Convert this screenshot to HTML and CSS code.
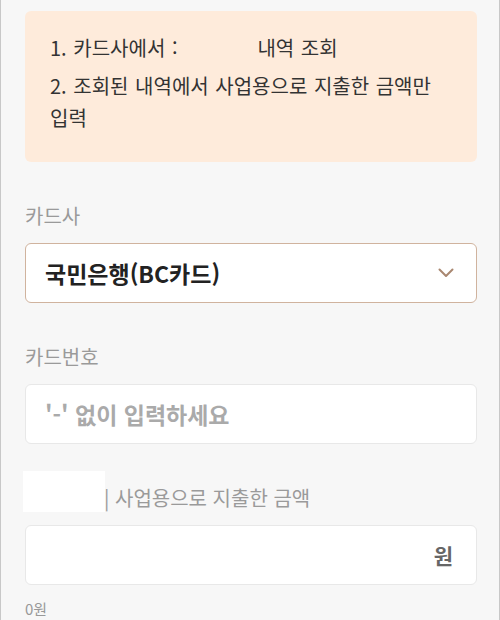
FILE: index.html
```html
<!DOCTYPE html>
<html lang="ko">
<head>
    <meta charset="UTF-8">
    <title>카드 사용내역 입력</title>
    <link rel="stylesheet" href="styles.css">
</head>
<body>

<div id="container">
    <!--안내 박스-->
    <div class="guideBox">
        <p class="guideLine">1. 카드사에서 :<span class="gap"></span>내역 조회</p>
        <p class="guideLine">2. 조회된 내역에서 사업용으로 지출한 금액만 입력</p>
    </div>

    <div class="field firstField">
        <div class="fieldLabel">카드사</div>
        <div class="selectBox">
            <span class="selectText">국민은행(BC카드)</span>
            <svg class="chevron" width="16" height="10" viewBox="0 0 16 10">
                <path d="M1.5 1.5 L8 8 L14.5 1.5" fill="none" stroke="#a98770" stroke-width="2" stroke-linecap="round" stroke-linejoin="round"/>
            </svg>
        </div>
    </div>

    <div class="field">
        <div class="fieldLabel">카드번호</div>
        <div class="inputBox">
            <span class="placeholder">'-' 없이 입력하세요</span>
        </div>
    </div>

    <div class="field">
        <!--가려진 부분은 흰 박스로 덮음-->
        <div class="fieldLabel coveredLabel"><span class="hidden"></span>| 사업용으로 지출한 금액</div>
        <div class="inputBox amountBox">
            <span class="unit">원</span>
        </div>
        <div class="amountHint">0원</div>
    </div>
</div>

</body>
</html>
```

FILE: styles.css
```css
/*CSS for whole page*/
body {
    margin: 0;
    background-color: #f7f7f7;
    font-family: "Noto Sans CJK KR", "Noto Sans", sans-serif;
}

#container {
    box-sizing: border-box;
    width: 500px;
    height: 620px;
    border-left: 1px solid #c8c8c8;
    border-right: 1px solid #c8c8c8;
    padding: 11px 22px 0 24px;
    overflow: hidden;
}

/*CSS for the guide box*/
.guideBox {
    background-color: #feebdb;
    border-radius: 6px;
    padding: 21px 25px 0 25px;
    height: 151px;
    box-sizing: border-box;
}

.guideLine {
    margin: 0 0 6px 0;
    font-size: 20px;
    line-height: 32px;
    word-spacing: 1px;
    color: #333333;
}

.gap {
    display: inline-block;
    width: 80px;
}

/*CSS for each field*/
.field {
    margin-top: 40px;
}

.fieldLabel {
    font-size: 20px;
    line-height: 28px;
    color: #9a9a9a;
    margin-bottom: 13px;
}

.coveredLabel {
    position: relative;
    padding-left: 79px;
}

.hidden {
    position: absolute;
    left: -2px;
    top: -13px;
    width: 82px;
    height: 41px;
    background-color: #ffffff;
}

.selectBox {
    display: flex;
    align-items: center;
    justify-content: space-between;
    height: 60px;
    box-sizing: border-box;
    background-color: #ffffff;
    border: 1px solid #d0b39e;
    border-radius: 6px;
    padding: 0 22px 0 19px;
}

.selectText {
    font-size: 23px;
    font-weight: bold;
    color: #222222;
}

.inputBox {
    display: flex;
    align-items: center;
    height: 60px;
    box-sizing: border-box;
    background-color: #ffffff;
    border: 1px solid #e8e8e8;
    border-radius: 6px;
    padding: 0 23px 0 19px;
}

.placeholder {
    font-size: 23px;
    font-weight: bold;
    color: #aaaaaa;
}

.amountBox {
    justify-content: flex-end;
}

.unit {
    font-size: 21px;
    font-weight: bold;
    color: #666666;
}

.amountHint {
    font-size: 15px;
    line-height: 20px;
    color: #999999;
    margin-top: 14px;
}
```
